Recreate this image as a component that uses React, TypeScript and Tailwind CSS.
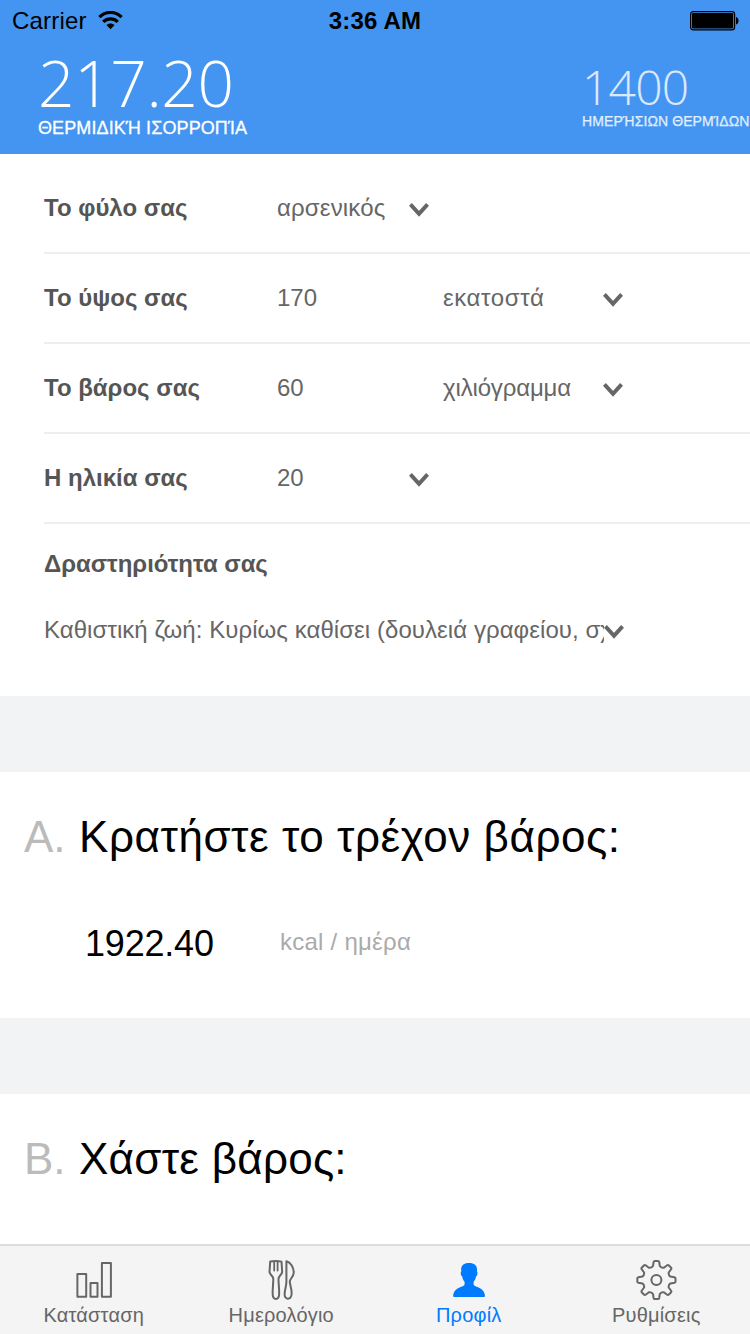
import React from "react";

const gearPath = (() => {
  const cx = 22.4;
  const cy = 22;
  const pt = (u: number, v: number, a: number) => {
    const x = cx + u * Math.cos(a) - v * Math.sin(a);
    const y = cy + u * Math.sin(a) + v * Math.cos(a);
    return `${x.toFixed(2)} ${y.toFixed(2)}`;
  };
  let d = "";
  for (let i = 0; i < 8; i++) {
    const a = (i * Math.PI) / 4;
    const next = a + Math.PI / 4;
    d += `${i === 0 ? "M" : "L"}${pt(14, -3.4, a)} L${pt(18, -2.8, a)} Q${pt(19.1, -2.6, a)} ${pt(19.1, -1.4, a)} L${pt(19.1, 1.4, a)} Q${pt(19.1, 2.6, a)} ${pt(18, 2.8, a)} L${pt(14, 3.4, a)} Q${pt(11.9, 4.93, a)} ${pt(14, -3.4, next)} `;
  }
  return d + "Z";
})();

function Chevron({ className = "" }: { className?: string }) {
  return (
    <svg className={`shrink-0 ${className}`} width="20" height="14" viewBox="0 0 20 14" fill="none" stroke="#666" strokeWidth="4">
      <path d="M1.4 1.4 L10 10.8 L18.6 1.4" />
    </svg>
  );
}

function Row({ label, children }: { label: string; children: React.ReactNode }) {
  return (
    <div className="ml-11 flex h-[90px] items-center border-b-2 border-[#eee]">
      <div className="w-[233px] shrink-0 font-bold text-[#555]">{label}</div>
      {children}
    </div>
  );
}

function Tab({ label, active, children }: { label: string; active?: boolean; children: React.ReactNode }) {
  return (
    <div className={`flex flex-1 flex-col items-center pt-3 ${active ? "text-[#007aff]" : "text-[#666]"}`}>
      <svg width="44" height="44" viewBox="0 0 44 44" fill="none" stroke="currentColor" strokeWidth="2" strokeLinejoin="round" strokeLinecap="round">
        {children}
      </svg>
      <div className="h-[26px] text-[20px] leading-[26px] tracking-[0.2px] whitespace-nowrap">{label}</div>
    </div>
  );
}

export default function App() {
  return (
    <div className="flex h-[1334px] w-[750px] flex-col overflow-hidden bg-white font-['Liberation_Sans',Arial,sans-serif] text-2xl text-[#666]">
      <header className="h-[154px] shrink-0 overflow-hidden bg-[#4495f1]">
        <div className="grid h-[42px] grid-cols-3 items-center pr-[11px] pl-3 text-black">
          <div className="flex items-center gap-[11px]">
            <span className="tracking-[0.2px]">Carrier</span>
            <svg width="25" height="20" viewBox="0 0 25 20" fill="none" stroke="#000" strokeWidth="3.2">
              <path d="M1.4 6.2 C7.5 -0.2 17.5 -0.2 23.6 6.2" />
              <path d="M5.2 10.8 C9.2 6.8 15.8 6.8 19.8 10.8" />
              <path d="M8.4 14 C10.8 11.9 14.2 11.9 16.6 14 L12.5 18.2 Z" fill="#000" stroke="none" />
            </svg>
          </div>
          <div className="pr-px text-center font-bold tracking-[0.2px]">3:36 AM</div>
          <div className="flex justify-end pb-px">
            <svg width="49" height="20" viewBox="0 0 49 20">
              <rect x="0.6" y="0.6" width="44" height="18.2" rx="2.6" fill="none" stroke="#000" strokeWidth="1.2" />
              <rect x="2" y="2" width="41.2" height="15.4" rx="1.2" fill="#000" />
              <path d="M46 6 C49.4 7 49.4 12.6 46 13.6 Z" fill="#000" />
            </svg>
          </div>
        </div>
        <div className="flex pl-[38px] text-white">
          <div className="w-[544px] shrink-0 pt-[9px]">
            <div className="mb-px h-16 font-['Open_Sans',sans-serif] text-[64px] leading-[64px] font-light tracking-[-0.4px]">217.20</div>
            <div className="h-6 text-lg leading-6 tracking-[0.1px] whitespace-nowrap [-webkit-text-stroke:0.3px_currentColor]">ΘΕΡΜΙΔΙΚΉ ΙΣΟΡΡΟΠΊΑ</div>
          </div>
          <div className="shrink-0 pt-[21px] text-white/80">
            <div className="h-12 font-['Open_Sans',sans-serif] text-[48px] leading-[48px] font-light tracking-[-0.8px]">1400</div>
            <div className="h-5 text-sm leading-5 tracking-[0.1px] whitespace-nowrap [-webkit-text-stroke:0.25px_currentColor]">ΗΜΕΡΉΣΙΩΝ ΘΕΡΜΊΔΩΝ</div>
          </div>
        </div>
      </header>

      <section className="h-[542px] shrink-0 pt-2.5">
        <Row label="Το φύλο σας">
          <div className="w-[132px] tracking-[0.15px]">αρσενικός</div>
          <Chevron className="mt-1" />
        </Row>
        <Row label="Το ύψος σας">
          <div className="w-[166px]">170</div>
          <div className="w-[160px] tracking-[0.6px]">εκατοστά</div>
          <Chevron className="mt-1" />
        </Row>
        <Row label="Το βάρος σας">
          <div className="w-[166px]">60</div>
          <div className="w-[160px] tracking-[-0.15px]">χιλιόγραμμα</div>
          <Chevron className="mt-1" />
        </Row>
        <Row label="Η ηλικία σας">
          <div className="w-[132px]">20</div>
          <Chevron className="mt-1" />
        </Row>
        <div className="ml-11 pt-5">
          <div className="h-10 leading-10 font-bold tracking-[-0.05px] text-[#555]">Δραστηριότητα σας</div>
          <div className="mt-[26px] flex h-10 items-center">
            <div className="w-[560px] overflow-hidden leading-10 tracking-[0.06px] whitespace-nowrap">
              Καθιστική ζωή: Κυρίως καθίσει (δουλειά γραφείου, σχολείο)
            </div>
            <Chevron className="mt-1" />
          </div>
        </div>
      </section>

      <div className="h-[76px] shrink-0 bg-[#f2f3f5]" />

      <section className="h-[246px] shrink-0 pl-6">
        <div className="flex h-[130px] items-center text-[44px] text-black">
          <span className="w-[55px] text-[#bbb]">A.</span>
          <span className="tracking-[0.55px] whitespace-nowrap">Κρατήστε το τρέχον βάρος:</span>
        </div>
        <div className="flex h-20 items-center pl-[61px]">
          <span className="w-[195px] pt-1 text-[36px] tracking-[-0.2px] text-black">1922.40</span>
          <span className="tracking-[0.25px] text-[#aaa]">kcal / ημέρα</span>
        </div>
      </section>

      <div className="h-[76px] shrink-0 bg-[#f2f3f5]" />

      <section className="h-[150px] shrink-0 pl-6">
        <div className="flex h-[130px] items-center text-[44px] text-black">
          <span className="w-[55px] text-[#bbb]">B.</span>
          <span className="tracking-[0.25px] whitespace-nowrap">Χάστε βάρος:</span>
        </div>
      </section>

      <nav className="flex h-[90px] shrink-0 border-t-2 border-[#ddd] bg-[#f4f4f4]">
        <Tab label="Κατάσταση">
          <rect x="5.4" y="16" width="8.8" height="22.8" />
          <rect x="18.5" y="25" width="7" height="13.8" />
          <rect x="29.9" y="5" width="9" height="33.8" />
        </Tab>
        <Tab label="Ημερολόγιο">
          <path d="M11.2 3.6 C14.8 2.8 19 2.8 22.5 3.6 L23.2 14 C22.4 17.4 19.4 18 19.5 21 C19.5 27 20.4 31 20.1 36.5 C19.8 42.4 14 42.4 13.7 36.5 C13.4 31 14.3 27 14.3 21 C14.4 18 11.4 17.4 10.5 14 Z" />
          <path d="M15.2 4 V12.6 M18.6 4 V12.6" strokeWidth="1.8" />
          <path d="M27.4 3.3 C31.6 4.3 35 9.6 34.7 15 C34.4 19 30.8 20.8 30.8 23.6 C30.8 27 33 31 32.6 36 C32 42.2 25.8 42.2 25.6 36.5 C25.6 31.5 27.6 28 27.4 23 Z" />
        </Tab>
        <Tab label="Προφίλ" active>
          <path
            d="M22 5 C27.6 5 30.2 7.6 30 12 L30 13.6 C31 15 30.3 17.6 29 18.6 C28.6 21 27.8 22.6 26.6 23.8 L26.6 26.4 C27.6 29.4 37.8 29 38 38 Q38 39 37 39 L7.2 39 Q6.2 39 6.2 38 C6.4 29 16.6 29.4 17.6 26.4 L17.6 23.8 C16.4 22.6 15.6 21 15.2 18.6 C13.9 17.6 13.2 15 14.2 13.6 L14.2 12 C14 7.6 16.4 5 22 5 Z"
            fill="currentColor"
            stroke="none"
          />
        </Tab>
        <Tab label="Ρυθμίσεις">
          <path d={gearPath} />
          <circle cx="22.4" cy="22" r="5" />
        </Tab>
      </nav>
    </div>
  );
}
